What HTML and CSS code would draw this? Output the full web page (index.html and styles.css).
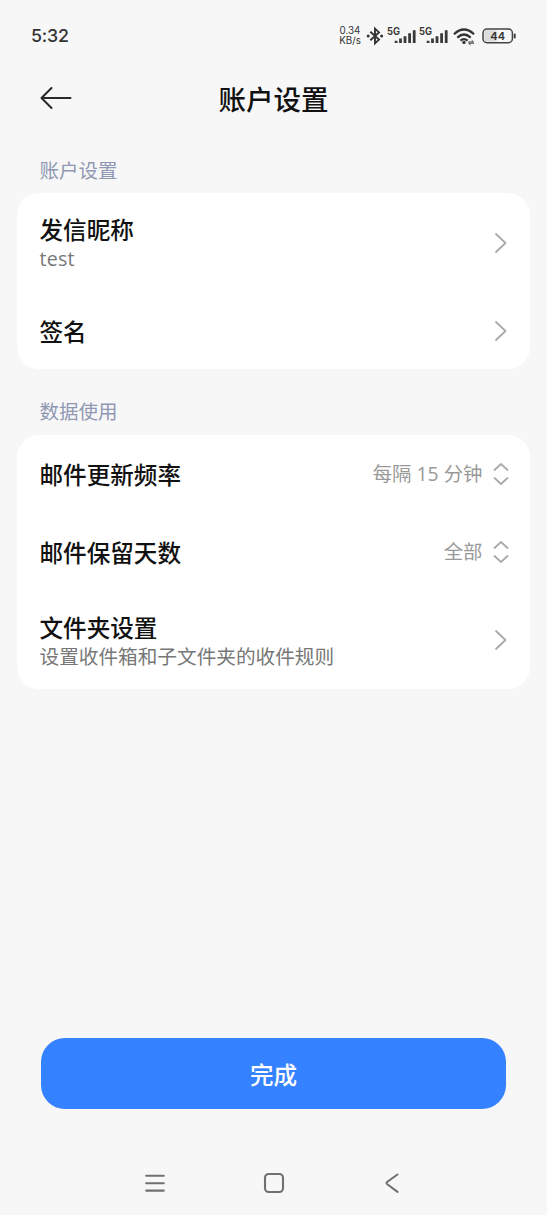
FILE: index.html
```
<!DOCTYPE html>
<html lang="zh-CN">
<head>
    <meta charset="UTF-8">
    <meta name="viewport" content="width=device-width, initial-scale=1.0">
    <title>账户设置</title>
    <link rel="stylesheet" href="styles.css">
</head>
<body>

    <div class="screen">
        <!-- 状态栏 -->
        <div class="status-bar">
            <span class="status-time">5:32</span>
            <div class="status-icons">
                <div class="net-speed"><span>0.34</span><span>KB/s</span></div>
                <svg class="icon-bluetooth" width="18" height="20" viewBox="0 0 18 20">
                    <path d="M4.3 5.8 L13 13.6 L9 17.4 V2.6 L13 6.4 L4.3 14.2" fill="none" stroke="#333" stroke-width="1.9"/>
                    <circle cx="2.2" cy="10" r="1.5" fill="#333"/>
                    <circle cx="15.6" cy="10" r="1.5" fill="#333"/>
                </svg>
                <svg class="icon-signal" width="32" height="20" viewBox="0 0 32 20">
                    <text class="signal-text" x="0" y="8.8" textLength="13" lengthAdjust="spacingAndGlyphs">5G</text>
                    <path d="M9.1 14.8v2.2M13.5 12.6v4.4M18 10.2v6.8M22.6 7.2v9.8M27.2 4.2v12.8" stroke="#3a3a3a" stroke-width="2.8"/>
                </svg>
                <svg class="icon-signal" width="32" height="20" viewBox="0 0 32 20">
                    <text class="signal-text" x="0" y="8.8" textLength="13" lengthAdjust="spacingAndGlyphs">5G</text>
                    <path d="M9.1 14.8v2.2M13.5 12.6v4.4M18 10.2v6.8M22.6 7.2v9.8M27.2 4.2v12.8" stroke="#3a3a3a" stroke-width="2.8"/>
                </svg>
                <svg class="icon-wifi" width="24" height="20" viewBox="0 0 24 20">
                    <g fill="none" stroke="#333" stroke-width="2.2">
                        <path d="M1 8.2 Q11 -1.2 21 8.2"/>
                        <path d="M4.3 11.6 Q11 5.4 17.7 11.6"/>
                        <path d="M7.4 14.6 Q11 11.6 14.6 14.6"/>
                    </g>
                    <circle cx="11" cy="16.4" r="1.7" fill="#333"/>
                    <path d="M15.2 16h5.4l-2-1.8M21 17.2h-5.4l2 1.8" fill="none" stroke="#444" stroke-width="1"/>
                </svg>
                <svg class="icon-battery" width="35" height="20" viewBox="0 0 35 20">
                    <rect x="2.2" y="4.2" width="13" height="11.6" rx="2.5" fill="#dcdcdc"/>
                    <rect x="1" y="3.1" width="29.4" height="13.6" rx="4" fill="none" stroke="#444" stroke-width="1.5"/>
                    <path d="M32.7 8.6v2.8" stroke="#444" stroke-width="2" stroke-linecap="round"/>
                    <text class="battery-text" x="15.7" y="13.9" text-anchor="middle">44</text>
                </svg>
            </div>
        </div>

        <!-- 标题栏 -->
        <header class="header">
            <button class="back-button" title="返回">
                <svg width="34" height="24" viewBox="0 0 34 24">
                    <path d="M31.5 12H2.5M12.5 2L2.5 12L12.5 22" fill="none" stroke="#2a2a2a" stroke-width="2.1" stroke-linecap="round" stroke-linejoin="round"/>
                </svg>
            </button>
            <h1 class="title">账户设置</h1>
        </header>

        <h2 class="section-title">账户设置</h2>
        <div class="card">
            <div class="row row-tall">
                <div class="row-text">
                    <span class="row-label">发信昵称</span>
                    <span class="row-desc latin">test</span>
                </div>
                <svg class="arrow" width="16" height="22" viewBox="0 0 16 22">
                    <path d="M3 2L12.5 11L3 20"/>
                </svg>
            </div>
            <div class="row">
                <span class="row-label">签名</span>
                <svg class="arrow" width="16" height="22" viewBox="0 0 16 22">
                    <path d="M3 2L12.5 11L3 20"/>
                </svg>
            </div>
        </div>

        <h2 class="section-title">数据使用</h2>
        <div class="card card-data">
            <div class="row">
                <span class="row-label">邮件更新频率</span>
                <span class="row-value">每隔 15 分钟</span>
                <svg class="arrow" width="16" height="24" viewBox="0 0 16 24">
                    <path d="M1.5 8L8 2L14.5 8M1.5 16L8 22L14.5 16"/>
                </svg>
            </div>
            <div class="row">
                <span class="row-label">邮件保留天数</span>
                <span class="row-value">全部</span>
                <svg class="arrow" width="16" height="24" viewBox="0 0 16 24">
                    <path d="M1.5 8L8 2L14.5 8M1.5 16L8 22L14.5 16"/>
                </svg>
            </div>
            <div class="row row-tall">
                <div class="row-text">
                    <span class="row-label">文件夹设置</span>
                    <span class="row-desc">设置收件箱和子文件夹的收件规则</span>
                </div>
                <svg class="arrow" width="16" height="22" viewBox="0 0 16 22">
                    <path d="M3 2L12.5 11L3 20"/>
                </svg>
            </div>
        </div>

        <button class="done-button">完成</button>

        <!-- 系统导航键 -->
        <nav class="nav-bar">
            <svg width="24" height="24" viewBox="0 0 24 24">
                <path d="M3.2 4.8h17.6M3.2 12.2h17.6M3.2 19.6h17.6"/>
            </svg>
            <svg width="24" height="24" viewBox="0 0 24 24">
                <rect x="3" y="3" width="18" height="18" rx="3.8"/>
            </svg>
            <svg width="24" height="24" viewBox="0 0 24 24">
                <path d="M17.5 3.5L7 11Q6 12 7 13L17.5 20.8"/>
            </svg>
        </nav>
    </div>

</body>
</html>
```
FILE: styles.css
```
* {
    box-sizing: border-box;
}

body {
    margin: 0;
    background-color: #fff;
    font-family: "Noto Sans CJK SC", sans-serif;
}

.screen {
    display: flex;
    flex-direction: column;
    width: 547px;
    height: 1215px;
    background-color: #f7f7f7; /* 页面灰底 */
}

/* 状态栏 */
.status-bar {
    display: flex;
    justify-content: space-between;
    align-items: center;
    height: 71px;
    padding: 0 30px 0 31px;
}

.status-time {
    font-family: Inter, sans-serif;
    font-size: 17.8px;
    font-weight: 500;
    letter-spacing: -0.2px;
    color: #333;
}

.status-icons {
    display: flex;
    align-items: center;
}

.net-speed {
    display: flex;
    flex-direction: column;
    align-items: center;
    width: 22px;
    margin-right: 5px;
    font-family: Inter, sans-serif;
    font-size: 9.8px;
    line-height: 9.5px;
    color: #333;
}

.icon-bluetooth {
    margin-right: 3px;
}

.icon-wifi {
    margin: 0 5px 0 2px;
}

.signal-text {
    font-family: Inter, sans-serif;
    font-size: 10px;
    font-weight: 700;
    fill: #3a3a3a;
}

.battery-text {
    font-family: Inter, sans-serif;
    font-size: 11px;
    font-weight: 600;
    fill: #333;
}

/* 标题栏 */
.header {
    display: grid;
    grid-template-columns: 34px 1fr 34px;
    align-items: center;
    height: 54px;
    padding: 0 39px;
}

.back-button {
    display: flex;
    padding: 0;
    border: none;
    background: none;
    cursor: pointer;
}

.title {
    margin: 0;
    font-size: 27.5px;
    font-weight: 500;
    line-height: 52px;
    text-align: center;
    color: #111;
}

.section-title {
    margin: 0;
    padding: 31px 39.5px 0;
    height: 68px;
    font-size: 19.5px;
    font-weight: 400;
    line-height: 28px;
    color: #9097b3;
}

/* 卡片 */
.card {
    width: 513px;
    margin-left: 17px;
    border-radius: 22px;
    background-color: #fff;
}

.card + .section-title {
    height: 66px;
    padding-top: 28px;
}

.row {
    display: flex;
    align-items: center;
    height: 78px;
    padding: 1px 21px 0 22.5px;
}

.card-data .row {
    padding-top: 0;
    padding-bottom: 1px;
}

.row-tall {
    height: 98px;
}

.row-text {
    display: flex;
    flex-direction: column;
    flex: 1;
    padding-top: 2px;
}

.row-label {
    flex: 1;
    font-size: 23.6px;
    font-weight: 500;
    line-height: 30px;
    color: #111;
}

.row-desc {
    font-size: 19.65px;
    line-height: 28px;
    color: #777;
}

.row-desc.latin {
    padding-top: 1px;
    font-family: "Open Sans", sans-serif;
    letter-spacing: 0.2px;
}

.row-value {
    margin-right: 10.5px;
    font-family: "Open Sans", "Noto Sans CJK SC", sans-serif;
    font-size: 19.4px;
    line-height: 28px;
    color: #999;
}

.arrow {
    fill: none;
    stroke: #aaa;
    stroke-width: 1.8;
    stroke-linecap: round;
    stroke-linejoin: round;
}

/* 完成按钮 */
.done-button {
    width: 465px;
    height: 71px;
    margin: auto 0 0 41px;
    padding: 0;
    border: none;
    border-radius: 24px;
    background-color: #3482ff;
    color: #fff;
    font-family: inherit;
    font-size: 23.6px;
    font-weight: 500;
    cursor: pointer;
}

/* 底部导航 */
.nav-bar {
    display: flex;
    justify-content: center;
    gap: 94.5px;
    margin: 62px 0 20px;
}

.nav-bar svg {
    fill: none;
    stroke: #707070;
    stroke-width: 2.1;
    stroke-linecap: round;
    stroke-linejoin: round;
}
```
